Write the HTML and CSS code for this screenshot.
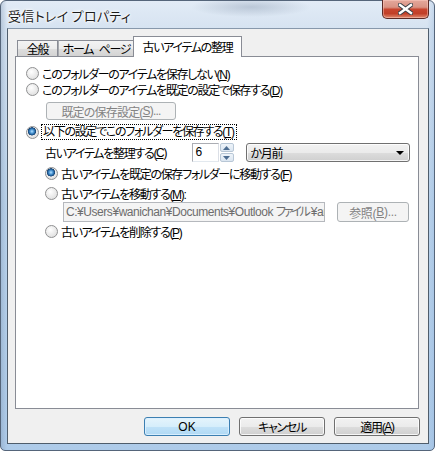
FILE: index.html
```html
<!DOCTYPE html>
<html lang="ja">
<head>
<meta charset="utf-8">
<title>受信トレイ プロパティ</title>
<link rel="stylesheet" href="styles.css">
</head>
<body>
<div class="window">
  <div class="titlebar">
    <span class="title">受信トレイ プロパティ</span>
    <div class="close">
      <svg width="15" height="12" viewBox="0 0 15 12">
        <path d="M2 2 L13 10 M13 2 L2 10" stroke="#3a3f46" stroke-width="4.4" stroke-linecap="square" fill="none"/>
        <path d="M2 2 L13 10 M13 2 L2 10" stroke="#ffffff" stroke-width="2.4" stroke-linecap="square" fill="none"/>
      </svg>
    </div>
  </div>
  <div class="client">
    <div class="tabs">
      <div class="tab t1">全般</div>
      <div class="tab t2">ホーム ページ</div>
      <div class="tab active">古いアイテムの整理</div>
    </div>
    <div class="panel">
      <div class="row r1"><span class="radio"></span><span>このフォルダーのアイテムを保存しない(<u>N</u>)</span></div>
      <div class="row"><span class="radio"></span><span>このフォルダーのアイテムを既定の設定で保存する(<u>D</u>)</span></div>
      <div class="btnrow"><div class="btn disabled wide">既定の保存設定(<u>S</u>)...</div></div>
      <div class="row r3"><span class="radio on"></span><span class="focus">以下の設定でこのフォルダーを保存する(<u>T</u>)</span></div>
      <div class="row r4">
        <span class="lbl">古いアイテムを整理する(<u>C</u>)</span>
        <div class="spin-input">6</div>
        <div class="spin">
          <div class="spin-btn up"><svg width="7" height="4" viewBox="0 0 7 4"><path d="M0 4 L3.5 0 L7 4 Z" fill="#4d6d91"/></svg></div>
          <div class="spin-btn down"><svg width="7" height="4" viewBox="0 0 7 4"><path d="M0 0 L3.5 4 L7 0 Z" fill="#4d6d91"/></svg></div>
        </div>
        <div class="combo"><span>か月前</span><svg width="8" height="4" viewBox="0 0 8 4"><path d="M0 0 L8 0 L4 4 Z" fill="#000"/></svg></div>
      </div>
      <div class="row r5 sub"><span class="radio on"></span><span>古いアイテムを既定の保存フォルダーに移動する(<u>F</u>)</span></div>
      <div class="row r6 sub"><span class="radio"></span><span>古いアイテムを移動する(<u>M</u>):</span></div>
      <div class="pathrow">
        <div class="pathbox">C:¥Users¥wanichan¥Documents¥Outlook <span class="kana">ファイル</span>¥archive.pst</div>
        <div class="btn disabled browse">参照(<u>B</u>)...</div>
      </div>
      <div class="row r8 sub"><span class="radio"></span><span>古いアイテムを削除する(<u>P</u>)</span></div>
    </div>
    <div class="buttons">
      <div class="dbtn default">OK</div>
      <div class="dbtn">キャンセル</div>
      <div class="dbtn">適用(<u>A</u>)</div>
    </div>
  </div>
</div>
</body>
</html>
```
FILE: styles.css
```css
* { box-sizing: border-box; }
html, body { margin: 0; padding: 0; }
body {
  width: 435px;
  height: 451px;
  overflow: hidden;
  background: #ffffff;
  font-family: "Liberation Sans", "Noto Sans CJK JP", sans-serif;
  font-size: 12px;
  font-feature-settings: "palt";
  color: #000;
}
u { text-decoration: underline; text-underline-offset: 1px; }

.window {
  width: 435px;
  height: 451px;
  border: 1px solid #55657a;
  border-radius: 6px 6px 5px 5px;
  background:
    radial-gradient(ellipse 60px 10px at 250px 6px, rgba(150,165,185,0.5), transparent),
    linear-gradient(90deg, rgba(120,145,175,0.35) 0, transparent 6px, transparent 426px, rgba(140,175,215,0.3) 433px),
    linear-gradient(180deg, #e2ebf6 0, #d6e3f1 27px, #bcd4ec 200px, #aecbe9 451px);
  display: flex;
  flex-direction: column;
}

.titlebar {
  height: 27px;
  display: flex;
  justify-content: space-between;
  align-items: flex-start;
  flex: none;
}
.title {
  padding: 7px 0 0 7px;
  font-family: "Noto Sans CJK JP", sans-serif;
  font-size: 13px;
  letter-spacing: 0.3px;
  line-height: 16px;
  color: #1b1b1b;
  text-shadow: 0 0 5px #fff, 0 0 3px #fff, 0 0 2px #fff;
}
.close {
  width: 47px;
  height: 19px;
  margin: -1px 5px 0 0;
  border: 1px solid #5b2a26;
  border-top: none;
  border-radius: 0 0 5px 5px;
  background: linear-gradient(180deg, #e4a89c 0, #d99384 40%, #c8452f 52%, #c13f28 75%, #e08a6f 100%);
  box-shadow: inset 0 0 0 1px rgba(255,210,200,0.45);
  display: flex;
  align-items: center;
  justify-content: center;
}

.client {
  margin-left: 6px;
  width: 422px;
  height: 416px;
  border: 1px solid #4f5d6c;
  border-top-color: #8798ab;
  background: #f0f0f0;
  display: flex;
  flex-direction: column;
  flex: none;
  letter-spacing: -1.3px;
}

.tabs {
  height: 27px;
  display: flex;
  align-items: flex-end;
  padding-left: 9px;
  flex: none;
  word-spacing: 4px;
}
.tab {
  height: 16px;
  border: 1px solid #898c95;
  border-bottom: none;
  background: linear-gradient(180deg, #f3f3f3 0, #ececec 50%, #dedede 51%, #d3d3d3 100%);
  font-family: "Noto Sans CJK JP", sans-serif;
  line-height: 15px;
  text-align: center;
  white-space: nowrap;
  flex: none;
}
.t1 { width: 41px; }
.t2 { width: 77px; border-left-color: #a6a9ae; }
.tab.active {
  width: 109px;
  height: 21px;
  margin: 0 -2px -1px -2px;
  background: #fff;
  position: relative;
  z-index: 1;
  line-height: 19px;
}

.panel {
  margin-left: 7px;
  width: 404px;
  height: 353px;
  border: 1px solid #898c95;
  background: #fff;
  padding: 8px 8px 0 10px;
  display: flex;
  flex-direction: column;
  flex: none;
}

.row {
  display: flex;
  align-items: center;
  height: 16px;
  white-space: nowrap;
  flex: none;
}
.radio {
  width: 13px;
  height: 13px;
  border-radius: 50%;
  flex: none;
  border: 1px solid #8f9091;
  background: radial-gradient(circle at 40% 35%, #ffffff 0, #f1f1f1 35%, #d9d9d9 100%);
  margin-right: 3px;
}
.radio.on {
  background:
    radial-gradient(circle at 45% 40%, #b8e2ff 0, #5aa3de 1.6px, #1f5f9a 3.2px, #17406e 3.9px, rgba(255,255,255,0) 4.3px),
    radial-gradient(circle at 40% 35%, #ffffff 0, #f1f1f1 35%, #d9d9d9 100%);
}

.btnrow { display: flex; margin-top: 5px; height: 18px; flex: none; }
.btn {
  height: 18px;
  border: 1px solid #adb2b5;
  border-radius: 3px;
  background: #f4f4f4;
  display: flex;
  align-items: center;
  justify-content: center;
  white-space: nowrap;
  flex: none;
  letter-spacing: -0.8px;
}
.btn.disabled { color: #838383; }
.wide { width: 130px; margin-left: 20px; }

.r3 { margin-top: 4px; }
.focus {
  border: 1px dotted #000;
  margin-left: -1px;
  padding: 0 2px 0 1px;
  height: 16px;
  line-height: 14px;
}

.r4 { margin-top: 3px; height: 19px; align-items: stretch; }
.lbl { width: 147px; margin-left: 19px; display: flex; align-items: center; }
.spin-input {
  width: 27px;
  height: 19px;
  border: 1px solid #abadb3;
  border-right-color: #dbdfe6;
  border-bottom-color: #e3e9ef;
  padding-left: 3px;
  line-height: 17px;
  background: #fff;
  letter-spacing: 0;
}
.spin {
  width: 15px;
  display: flex;
  flex-direction: column;
  gap: 1px;
  margin-left: 1px;
}
.spin-btn {
  flex: 1;
  border: 1px solid #b8c7d6;
  border-radius: 2px;
  background: linear-gradient(180deg, #eef4fa 0, #dbe6f1 100%);
  display: flex;
  align-items: center;
  justify-content: center;
}
.combo {
  width: 164px;
  margin-left: 12px;
  border: 1px solid #707070;
  border-radius: 3px;
  background: linear-gradient(180deg, #f2f2f2 0, #ebebeb 50%, #dddddd 51%, #cfcfcf 100%);
  box-shadow: inset 0 0 0 1px rgba(255,255,255,0.8);
  display: flex;
  align-items: center;
  justify-content: space-between;
  padding: 0 5px 0 3px;
  font-family: "Noto Sans CJK JP", sans-serif;
}

.sub { padding-left: 19px; }
.r5 { margin-top: 3px; }
.r6 { margin-top: 4px; }
.pathrow { display: flex; margin-top: 1px; height: 20px; padding-left: 37px; flex: none; }
.pathbox {
  width: 262px;
  height: 20px;
  border: 1px solid #b5b8bd;
  background: #f4f4f4;
  color: #6d6d6d;
  padding-left: 2px;
  line-height: 18px;
  white-space: nowrap;
  overflow: hidden;
  letter-spacing: -0.45px;
}
.kana { letter-spacing: -2.2px; margin-right: 2px; }
.browse { width: 72px; height: 20px; margin-left: 12px; letter-spacing: -0.3px; }
.r8 { margin-top: 1px; }

.buttons {
  display: flex;
  justify-content: flex-end;
  gap: 9px;
  margin-top: 8px;
  padding-right: 8px;
  flex: none;
}
.dbtn {
  width: 86px;
  height: 19px;
  border: 1px solid #707070;
  border-radius: 3px;
  background: linear-gradient(180deg, #f2f2f2 0, #ebebeb 50%, #dddddd 51%, #cfcfcf 100%);
  box-shadow: inset 0 0 0 1px rgba(255,255,255,0.8);
  display: flex;
  align-items: center;
  justify-content: center;
  white-space: nowrap;
}
.dbtn.default {
  border-color: #3c7fb1;
  background: linear-gradient(180deg, #e5f4fc 0, #d6eefb 50%, #c0e2f8 51%, #b0d9f4 100%);
  box-shadow: inset 0 0 0 1px rgba(220,240,255,0.9);
  letter-spacing: 0;
}
```
